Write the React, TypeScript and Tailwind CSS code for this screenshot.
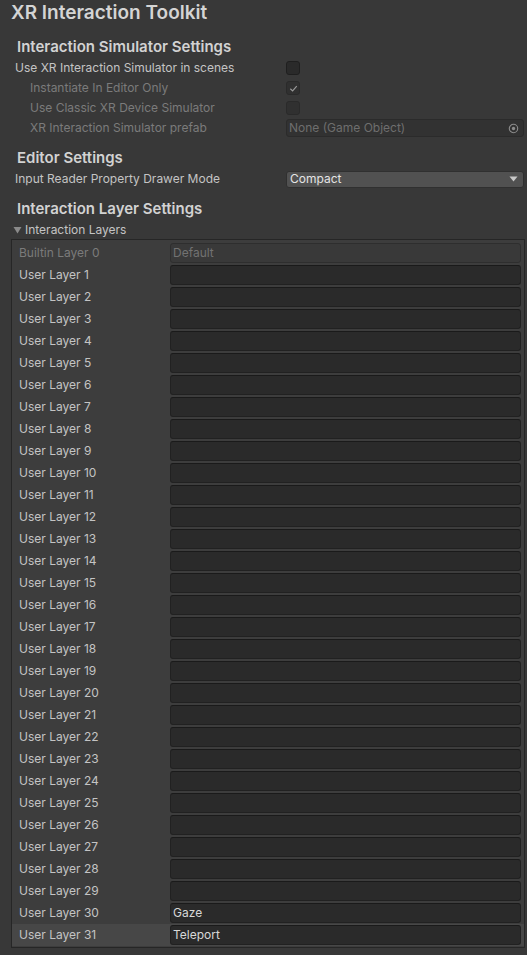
import React from 'react';

const font = { fontFamily: 'Inter, "Noto Sans", sans-serif' };

const Checkbox: React.FC<{ checked?: boolean; disabled?: boolean }> = ({ checked, disabled }) => (
  <div
    className={`w-[14px] h-[14px] rounded-[3px] border flex items-center justify-center ${
      disabled ? 'bg-[#303030] border-[#2a2a2a]' : 'bg-[#2a2a2a] border-[#1f1f1f]'
    }`}
  >
    {checked && (
      <svg width="9" height="9" viewBox="0 0 10 10">
        <path d="M1.5 5.3 L4 7.6 L8.6 2.4" fill="none" stroke="#9a9a9a" strokeWidth="1.3" />
      </svg>
    )}
  </div>
);

const SettingRow: React.FC<{ label: string; indent?: boolean; dim?: boolean; children: React.ReactNode }> = ({
  label,
  indent,
  dim,
  children,
}) => (
  <div className="flex items-center h-[20px]">
    <div
      className={`w-[286px] shrink-0 text-[12px] ${indent ? 'pl-[30px]' : 'pl-[15px]'} ${
        dim ? 'text-[#7b7b7b]' : 'text-[#c4c4c4]'
      }`}
    >
      {label}
    </div>
    <div className="flex-1 pr-[3px] flex items-center">{children}</div>
  </div>
);

const Header: React.FC<{ title: string; className?: string }> = ({ title, className }) => (
  <div className={`h-[20px] flex items-center pl-[17px] text-[15px] font-semibold text-[#d2d2d2] ${className ?? ''}`}>
    {title}
  </div>
);

const layers: { name: string; value: string }[] = Array.from({ length: 31 }, (_, i) => ({
  name: `User Layer ${i + 1}`,
  value: i + 1 === 30 ? 'Gaze' : i + 1 === 31 ? 'Teleport' : '',
}));

export default function App() {
  return (
    <div className="w-[527px] h-[955px] bg-[#383838] overflow-hidden" style={font}>
      <div className="h-[26px] flex items-center pl-[11px] text-[19px] font-semibold text-[#d4d4d4]">
        XR Interaction Toolkit
      </div>

      <Header title="Interaction Simulator Settings" className="mt-[11px]" />
      <div className="mt-[1px]">
        <SettingRow label="Use XR Interaction Simulator in scenes">
          <Checkbox />
        </SettingRow>
        <SettingRow label="Instantiate In Editor Only" indent dim>
          <Checkbox checked disabled />
        </SettingRow>
        <SettingRow label="Use Classic XR Device Simulator" indent dim>
          <Checkbox disabled />
        </SettingRow>
        <SettingRow label="XR Interaction Simulator prefab" indent dim>
          <div className="flex-1 h-[18px] rounded-[3px] bg-[#323232] border border-[#2b2b2b] flex items-center pl-[2px] pr-[4px] text-[12px] text-[#6e6e6e]">
            <span className="flex-1">None (Game Object)</span>
            <svg width="11" height="11" viewBox="0 0 12 12">
              <circle cx="6" cy="6" r="4.6" fill="none" stroke="#8c8c8c" strokeWidth="1.2" />
              <circle cx="6" cy="6" r="1.8" fill="#8c8c8c" />
            </svg>
          </div>
        </SettingRow>
      </div>

      <Header title="Editor Settings" className="mt-[10px]" />
      <div className="mt-[1px]">
        <SettingRow label="Input Reader Property Drawer Mode">
          <div className="flex-1 h-[17px] rounded-[3px] bg-[#515151] border border-[#303030] flex items-center pl-[3px] pr-[5px] text-[12px] text-[#e4e4e4]">
            <span className="flex-1">Compact</span>
            <svg width="9" height="6" viewBox="0 0 9 6">
              <path d="M0.5 0.5 L8.5 0.5 L4.5 5.5 Z" fill="#c8c8c8" />
            </svg>
          </div>
        </SettingRow>
      </div>

      <Header title="Interaction Layer Settings" className="mt-[10px]" />
      <div className="mt-[2px] h-[18px] flex items-center pl-[13px] text-[12px] text-[#c4c4c4]">
        <svg width="9" height="8" viewBox="0 0 9 8" className="mr-[3px]">
          <path d="M0.5 1 L8.5 1 L4.5 7.5 Z" fill="#8a8a8a" />
        </svg>
        Interaction Layers
      </div>

      <div className="ml-[11px] mr-[2px] border border-[#262626] bg-[#3d3d3d] pt-[2px] pb-[1px]">
        <div className="flex items-center h-[22px]">
          <div className="w-[158px] shrink-0 pl-[7px] text-[12px] text-[#7b7b7b]">Builtin Layer 0</div>
          <div className="flex-1 mr-[3px] h-[20px] rounded-[3px] bg-[#393939] border border-[#2e2e2e] flex items-center pl-[2px] text-[12px] text-[#727272]">
            Default
          </div>
        </div>
        {layers.map((l, i) => (
          <div key={l.name} className={`flex items-center h-[22px] ${i === 30 ? 'bg-[#474747]' : ''}`}>
            <div className="w-[158px] shrink-0 pl-[7px] text-[12px] text-[#c4c4c4]">{l.name}</div>
            <div className="flex-1 mr-[3px] h-[20px] rounded-[3px] bg-[#2a2a2a] border border-[#212121] border-t-[#1a1a1a] flex items-center pl-[2px] text-[12px] text-[#d8d8d8]">
              {l.value}
            </div>
          </div>
        ))}
      </div>
    </div>
  );
}
